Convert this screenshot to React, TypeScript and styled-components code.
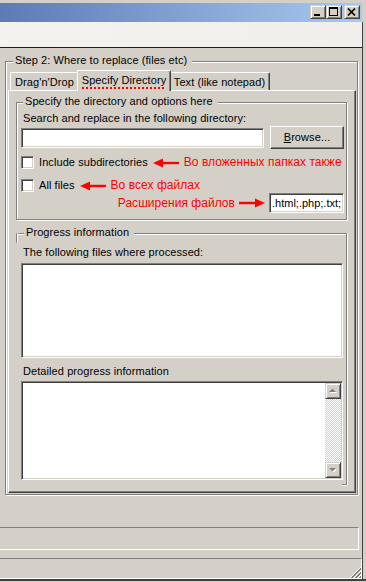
import React from "react";
import styled, { createGlobalStyle, css } from "styled-components";

const FACE = "#d4d0c8";
const SHADOW = "#808080";
const DARK = "#404040";
const RED = "#ff0000";
const FONT = `"Liberation Sans", Arial, sans-serif`;

const GlobalStyle = createGlobalStyle`
  html, body { margin: 0; padding: 0; background: ${FACE}; }
  body { font-family: ${FONT}; font-size: 11px; line-height: 13px; color: #000; letter-spacing: 0.08px; }
  *, *::before, *::after { box-sizing: border-box; }
`;

const sunken = css`
  border: 1px solid;
  border-color: ${SHADOW} #fff #fff ${SHADOW};
  box-shadow: inset 1px 1px 0 ${DARK}, inset -1px -1px 0 ${FACE};
  background: #fff;
  padding: 1px;
`;

const raisedSoft = css`
  border: 1px solid;
  border-color: ${FACE} ${DARK} ${DARK} ${FACE};
  box-shadow: inset 1px 1px 0 #fff, inset -1px -1px 0 ${SHADOW};
  background: ${FACE};
`;

const Window = styled.div`
  width: 366px;
  height: 582px;
  display: flex;
  flex-direction: column;
  padding-top: 3px;
  background: ${FACE};
  overflow: hidden;
`;

const TitleBar = styled.div`
  flex: none;
  height: 19px;
  margin-right: 4px;
  display: flex;
  justify-content: flex-end;
  align-items: flex-start;
  padding: 2px 2px 0 0;
  background: linear-gradient(to right, #5b7bb6, #a6caf0);
`;

const CaptionButton = styled.div<{ $spaced?: boolean }>`
  flex: none;
  width: 16px;
  height: 14px;
  margin-left: ${(p) => (p.$spaced ? "2px" : "0")};
  ${raisedSoft};
  svg {
    display: block;
  }
`;

const Body = styled.div`
  flex: 1;
  display: flex;
  min-height: 0;
`;

const Client = styled.div`
  flex: none;
  width: 362px;
  display: flex;
  flex-direction: column;
`;

const RightFrame = styled.div`
  flex: 1;
  border-left: 1px solid ${DARK};
`;

const BottomFrame = styled.div`
  flex: none;
  height: 3px;
  border-top: 2px solid ${DARK};
`;

const MenuBand = styled.div`
  flex: none;
  height: 26px;
  background: linear-gradient(to right, #f3f2ef, #f0efeb);
  border-bottom: 1px solid #1c1c1c;
`;

const GroupBox = styled.div<{ $partial?: boolean }>`
  position: relative;
  flex: none;
  display: flex;
  flex-direction: column;
  border: 1px solid ${SHADOW};
  box-shadow: inset 1px 1px 0 #fff, 1px 1px 0 #fff;
  ${(p) =>
    p.$partial &&
    css`
      border-left-color: transparent;
      border-bottom-color: transparent;
      box-shadow: inset 0 1px 0 #fff, 1px 0 0 #fff;
      &::before {
        content: "";
        position: absolute;
        left: -1px;
        top: -1px;
        width: 2px;
        height: 10px;
        background: linear-gradient(to right, ${SHADOW} 1px, #fff 1px);
      }
      &::after {
        content: "";
        position: absolute;
        right: -1px;
        bottom: -2px;
        width: 5px;
        height: 2px;
        background: linear-gradient(to bottom, ${SHADOW} 1px, #fff 1px);
      }
    `}
`;

const OuterGroup = styled(GroupBox)`
  width: 353px;
  height: 434px;
  margin: 13px 0 0 5px;
  padding: 8px 1px 1px 2px;
`;

const OptionsGroup = styled(GroupBox)`
  width: 331px;
  height: 118px;
  margin-top: 11px;
  padding: 9px 2px 6px 4px;
`;

const ProgressGroup = styled(GroupBox)`
  width: 331px;
  height: 252px;
  margin-top: 13px;
  padding: 12px 3px 4px 4px;
`;

const GroupCaption = styled.span<{ $left: number }>`
  position: absolute;
  top: -8px;
  left: ${(p) => p.$left}px;
  padding: 0 5px 0 2px;
  background: ${FACE};
  line-height: 13px;
  white-space: nowrap;
`;

const TabControl = styled.div`
  flex: 1;
  display: flex;
  flex-direction: column;
`;

const TabStrip = styled.div`
  flex: none;
  height: 20px;
  display: flex;
  align-items: flex-end;
  padding-left: 2px;
`;

const Tab = styled.div<{ $w: number; $active?: boolean }>`
  position: relative;
  flex: none;
  width: ${(p) => p.$w + (p.$active ? 4 : 0)}px;
  height: ${(p) => (p.$active ? 21 : 18)}px;
  margin: 0 ${(p) => (p.$active ? -2 : 0)}px ${(p) => (p.$active ? -1 : 0)}px;
  z-index: ${(p) => (p.$active ? 1 : 0)};
  padding-top: 3px;
  text-align: center;
  white-space: nowrap;
  background: ${FACE};
  border-top: 1px solid #fff;
  border-left: 1px solid #fff;
  border-right: 1px solid ${DARK};
  border-radius: 2px 2px 0 0;
  box-shadow: inset -1px 0 0 ${SHADOW};
`;

const Marked = styled.span`
  display: inline-block;
  height: 15px;
  background: repeating-linear-gradient(to right, ${RED} 0 2px, transparent 2px 4px) left bottom / 100% 2px no-repeat;
`;

const TabPanel = styled.div`
  flex: 1;
  display: flex;
  flex-direction: column;
  padding-left: 7px;
  border-top: 1px solid #fff;
  border-left: 1px solid #fff;
  border-right: 1px solid ${DARK};
  border-bottom: 1px solid ${DARK};
  box-shadow: inset -1px -1px 0 ${SHADOW};
`;

const FieldLabel = styled.div<{ $mt?: number }>`
  flex: none;
  height: 13px;
  margin-top: ${(p) => p.$mt ?? 0}px;
  padding-left: 2px;
  white-space: nowrap;
`;

const Row = styled.div<{ $mt: number; $h: number; $gap: number; $end?: boolean }>`
  flex: none;
  display: flex;
  align-items: center;
  justify-content: ${(p) => (p.$end ? "flex-end" : "flex-start")};
  gap: ${(p) => p.$gap}px;
  height: ${(p) => p.$h}px;
  margin-top: ${(p) => p.$mt}px;
  white-space: nowrap;
`;

const TextInput = styled.div<{ $w: number }>`
  flex: none;
  width: ${(p) => p.$w}px;
  height: 20px;
  ${sunken};
  padding: 1px 2px 0;
  display: flex;
  align-items: center;
  overflow: hidden;
  letter-spacing: 0;
`;

const Button = styled.div`
  flex: none;
  width: 74px;
  height: 23px;
  margin-left: 2px;
  border: 1px solid;
  border-color: #fff ${DARK} ${DARK} #fff;
  box-shadow: inset -1px -1px 0 ${SHADOW};
  background: ${FACE};
  display: flex;
  align-items: center;
  justify-content: center;
  u {
    text-decoration: underline;
    text-underline-offset: 1px;
  }
`;

const CheckBox = styled.span`
  flex: none;
  width: 13px;
  height: 13px;
  ${sunken};
`;

const CheckLabel = styled.span`
  margin-left: 0;
`;

const RedNote = styled.span`
  font-size: 12px;
  line-height: 13px;
  letter-spacing: 0.04px;
  color: ${RED};
`;

const ArrowSvg = styled.svg`
  flex: none;
  display: block;
  fill: ${RED};
`;

const ListBox = styled.div<{ $h: number; $mt: number }>`
  flex: none;
  width: 322px;
  height: ${(p) => p.$h}px;
  margin-top: ${(p) => p.$mt}px;
  ${sunken};
  display: flex;
  justify-content: flex-end;
`;

const ScrollBar = styled.div`
  flex: none;
  width: 16px;
  display: flex;
  flex-direction: column;
`;

const ScrollButton = styled.div`
  flex: none;
  height: 16px;
  ${raisedSoft};
  svg {
    display: block;
  }
`;

const ScrollTrack = styled.div`
  flex: 1;
  background: repeating-conic-gradient(${FACE} 0 25%, #fff 0 50%) 0 0 / 2px 2px;
`;

const StatusPanel = styled.div<{ $mt: number; $h: number; $mr: number }>`
  position: relative;
  flex: none;
  height: ${(p) => p.$h}px;
  margin-top: ${(p) => p.$mt}px;
  margin-right: ${(p) => p.$mr}px;
  border-top: 1px solid ${SHADOW};
  border-right: 1px solid #fff;
  border-bottom: 1px solid #fff;
`;

const Grip = styled.svg`
  position: absolute;
  right: 0;
  bottom: 0;
  display: block;
`;

const RedArrow: React.FC<{ dir: "left" | "right" }> = ({ dir }) => (
  <ArrowSvg width="26" height="10" viewBox="0 0 26 10">
    {dir === "left" ? (
      <>
        <polygon points="0,5 10,0.5 10,9.5" />
        <rect x="9" y="3.8" width="17" height="2.4" />
      </>
    ) : (
      <>
        <polygon points="26,5 16,0.5 16,9.5" />
        <rect x="0" y="3.8" width="17" height="2.4" />
      </>
    )}
  </ArrowSvg>
);

const ScrollArrow: React.FC<{ up?: boolean }> = ({ up }) => (
  <svg width="14" height="14" viewBox="0 0 14 14">
    {up ? (
      <>
        <polygon points="4,9 11,9 7.5,5.5" fill="#fff" />
        <polygon points="3,8 10,8 6.5,4.5" fill={SHADOW} />
      </>
    ) : (
      <>
        <polygon points="4,6 11,6 7.5,9.5" fill="#fff" />
        <polygon points="3,5 10,5 6.5,8.5" fill={SHADOW} />
      </>
    )}
  </svg>
);

const GripIcon = () => {
  const lines: { c: number; color: string }[] = [];
  [1, 5, 9].forEach((base) => {
    lines.push({ c: base, color: "#fff" });
    lines.push({ c: base + 1, color: SHADOW });
    lines.push({ c: base + 2, color: SHADOW });
  });
  return (
    <Grip width="12" height="12" viewBox="0 0 12 12" shapeRendering="crispEdges">
      {lines.map((l, i) => (
        <line key={i} x1={l.c} y1={12} x2={12} y2={l.c} stroke={l.color} strokeWidth="1" />
      ))}
    </Grip>
  );
};

export default function App() {
  return (
    <>
      <GlobalStyle />
      <Window>
        <TitleBar>
          <CaptionButton>
            <svg width="14" height="12" viewBox="0 0 14 12">
              <rect x="3" y="8" width="6" height="2" fill="#000" />
            </svg>
          </CaptionButton>
          <CaptionButton>
            <svg width="14" height="12" viewBox="0 0 14 12">
              <path d="M2 1h9v9H2z M3 3v6h7V3z" fill="#000" fillRule="evenodd" />
            </svg>
          </CaptionButton>
          <CaptionButton $spaced>
            <svg width="14" height="12" viewBox="0 0 14 12">
              <path d="M3 2.5 L10 9.5 M10 2.5 L3 9.5" stroke="#000" strokeWidth="1.7" fill="none" />
            </svg>
          </CaptionButton>
        </TitleBar>
        <Body>
          <Client>
            <MenuBand />
            <OuterGroup>
              <GroupCaption $left={7}>Step 2: Where to replace (files etc)</GroupCaption>
              <TabControl>
                <TabStrip>
                  <Tab $w={69}>Drag'n'Drop</Tab>
                  <Tab $w={90} $active>
                    <Marked>Specify Directory</Marked>
                  </Tab>
                  <Tab $w={101}>Text (like notepad)</Tab>
                </TabStrip>
                <TabPanel>
                  <OptionsGroup>
                    <GroupCaption $left={6}>Specify the directory and options here</GroupCaption>
                    <FieldLabel>Search and replace in the following directory:</FieldLabel>
                    <Row $mt={1} $h={23} $gap={4}>
                      <TextInput $w={243} />
                      <Button>
                        <span>
                          <u>B</u>rowse...
                        </span>
                      </Button>
                    </Row>
                    <Row $mt={7} $h={13} $gap={5}>
                      <CheckBox />
                      <CheckLabel>Include subdirectories</CheckLabel>
                      <RedArrow dir="left" />
                      <RedNote>Во вложенных папках также</RedNote>
                    </Row>
                    <Row $mt={10} $h={13} $gap={5}>
                      <CheckBox />
                      <CheckLabel>All files</CheckLabel>
                      <RedArrow dir="left" />
                      <RedNote>Во всех файлах</RedNote>
                    </Row>
                    <Row $mt={1} $h={20} $gap={4} $end>
                      <RedNote>Расширения файлов</RedNote>
                      <RedArrow dir="right" />
                      <TextInput $w={75}>.html;.php;.txt;</TextInput>
                    </Row>
                  </OptionsGroup>
                  <ProgressGroup $partial>
                    <GroupCaption $left={7}>Progress information</GroupCaption>
                    <FieldLabel>The following files where processed:</FieldLabel>
                    <ListBox $h={95} $mt={4} />
                    <FieldLabel $mt={7}>Detailed progress information</FieldLabel>
                    <ListBox $h={99} $mt={3}>
                      <ScrollBar>
                        <ScrollButton>
                          <ScrollArrow up />
                        </ScrollButton>
                        <ScrollTrack />
                        <ScrollButton>
                          <ScrollArrow />
                        </ScrollButton>
                      </ScrollBar>
                    </ListBox>
                  </ProgressGroup>
                </TabPanel>
              </TabControl>
            </OuterGroup>
            <StatusPanel $mt={32} $h={23} $mr={3} />
            <StatusPanel $mt={8} $h={21} $mr={0}>
              <GripIcon />
            </StatusPanel>
          </Client>
          <RightFrame />
        </Body>
        <BottomFrame />
      </Window>
    </>
  );
}
